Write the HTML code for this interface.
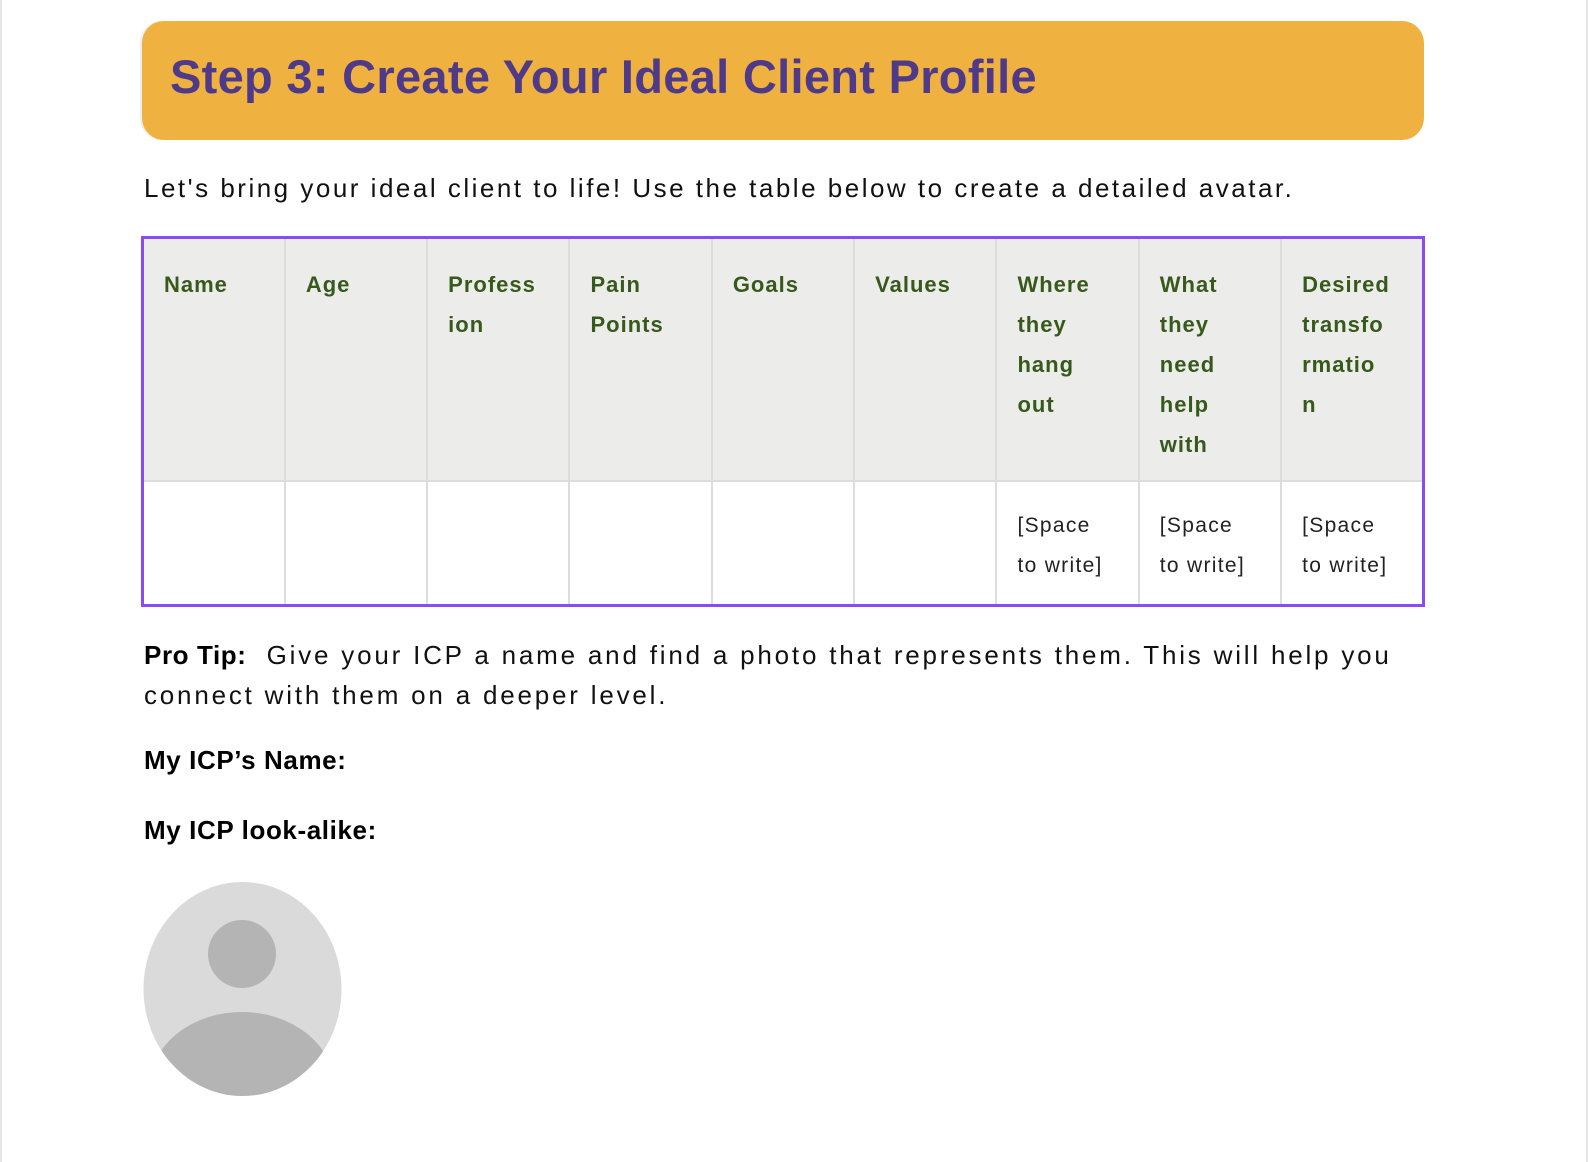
<!DOCTYPE html>
<html><head><meta charset="utf-8"><style>
body{margin:0;width:1588px;height:1162px;background:#fff;font-family:"Liberation Sans",sans-serif;position:relative;overflow:hidden}
.lb{position:absolute;left:0;top:0;width:2px;height:1162px;background:#e6e6e6}
.rb{position:absolute;left:1586px;top:0;width:2px;height:1162px;background:#e6e6e6}
.hdr{position:absolute;left:142px;top:21px;width:1282px;height:119px;background:#efb140;border-radius:22px;box-shadow:-2px 0 0 #eee}
.hdr h1{margin:0;position:absolute;left:28px;top:28px;font-size:47px;font-weight:bold;color:#4f3a8a;letter-spacing:0.3px}
.p{position:absolute;left:144px;font-size:26px;color:#111;letter-spacing:2.5px;white-space:nowrap}
table{position:absolute;left:141px;top:236px;width:1284px;height:371px;border-collapse:collapse;border:3px solid #8a4cf2;table-layout:fixed}
td{border:2px solid #ddd;vertical-align:top;padding:0 20px;font-size:22px;letter-spacing:1px;white-space:nowrap}
tr.h td{background:#ececea;color:#37591b;font-weight:bold;line-height:40px;padding-top:26px;height:215px}
tr.b td{line-height:40px;padding-top:24px;color:#222;font-size:21px;letter-spacing:1.3px}
.b2{font-weight:bold;color:#000;letter-spacing:0.6px}
</style></head><body>
<div class="lb"></div><div class="rb"></div>
<div class="hdr"><h1>Step 3: Create Your Ideal Client Profile</h1></div>
<div class="p" style="top:173px">Let's bring your ideal client to life! Use the table below to create a detailed avatar.</div>
<table>
<tr class="h"><td>Name</td><td>Age</td><td>Profess<br>ion</td><td>Pain<br>Points</td><td>Goals</td><td>Values</td><td>Where<br>they<br>hang<br>out</td><td>What<br>they<br>need<br>help<br>with</td><td>Desired<br>transfo<br>rmatio<br>n</td></tr>
<tr class="b"><td></td><td></td><td></td><td></td><td></td><td></td><td>[Space<br>to write]</td><td>[Space<br>to write]</td><td>[Space<br>to write]</td></tr>
</table>
<div class="p" style="top:635px;line-height:40px;letter-spacing:2.8px"><span class="b2">Pro Tip:</span>&nbsp; Give your ICP a name and find a photo that represents them. This will help you<br>connect with them on a deeper level.</div>
<div class="p b2" style="top:745px">My ICP’s Name:</div>
<div class="p b2" style="top:815px">My ICP look-alike:</div>
<svg style="position:absolute;left:143px;top:881px" width="199" height="216" viewBox="0 0 199 216">
<defs><clipPath id="c"><ellipse cx="99.5" cy="108" rx="99" ry="107"/></clipPath></defs>
<ellipse cx="99.5" cy="108" rx="99" ry="107" fill="#dadada"/>
<g clip-path="url(#c)" fill="#b4b4b4"><circle cx="99" cy="73" r="34"/><ellipse cx="99" cy="205" rx="92" ry="74"/></g>
</svg>
</body></html>
